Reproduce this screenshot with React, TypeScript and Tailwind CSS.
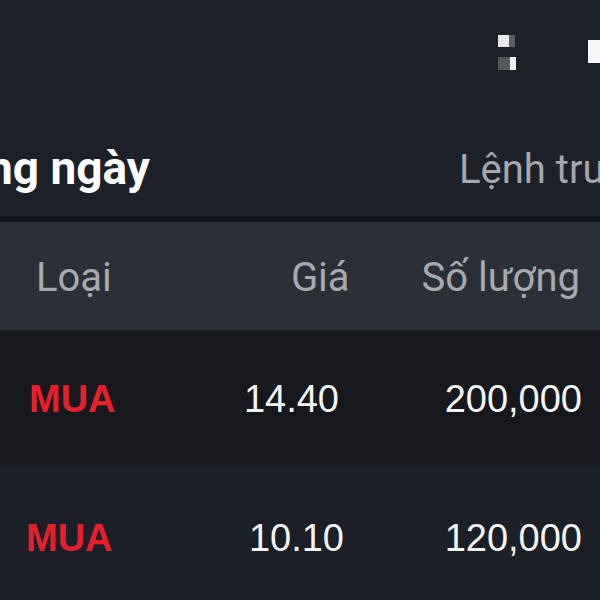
import React from 'react';

const rows = [
  { side: 'MUA', price: '14.40', qty: '200,000', bg: 'bg-[#16181d]', pad: 'pt-[4px]', sideMl: 'ml-[29px]', priceW: 'w-[339px]' },
  { side: 'MUA', price: '10.10', qty: '120,000', bg: 'bg-[#1b2028]', pad: 'pt-[12px]', sideMl: 'ml-[26px]', priceW: 'w-[344px]' },
];

function TopIcons() {
  return (
    <div className="flex h-[130px] items-start justify-end bg-[#1c2028] pt-[35px]">
      {/* blurred fragments of status icons */}
      <div className="mr-[72px] flex flex-col gap-[10px]">
        <div className="flex">
          <span className="h-[12px] w-[11px] bg-[#e8e9eb]" />
          <span className="h-[12px] w-[6px] bg-[#5a5e65]" />
        </div>
        <div className="flex">
          <span className="h-[13px] w-[12px] bg-[#55595f]" />
          <span className="h-[13px] w-[6px] bg-[#f2f2f3]" />
        </div>
      </div>
      <span className="mt-[5px] h-[23px] w-[12px] bg-[#f7f7f8]" />
    </div>
  );
}

function Tabs() {
  return (
    <div className="flex h-[92px] overflow-hidden border-b-[6px] border-[#14171c] bg-[#1c2028] font-['Roboto',sans-serif] leading-none">
      <div className="relative flex w-[290px] shrink-0 items-start justify-end pt-[15px]">
        <span className="whitespace-nowrap pr-[140px] text-[46px] font-bold text-white">Lệnh trong ngày</span>
        <span className="absolute bottom-[-6px] left-0 h-[6px] w-[290px] bg-[#0c56a6]" />
      </div>
      <div className="flex flex-1 items-start pl-[169px] pt-[20px]">
        <span className="whitespace-nowrap text-[40px] text-[#a3a7ae]">Lệnh trước ngày</span>
      </div>
    </div>
  );
}

export default function App() {
  return (
    <div className="h-[600px] w-[600px] overflow-hidden bg-[#1c2028]">
      <TopIcons />
      <Tabs />
      <div className="flex h-[108px] items-center bg-[#2a2f38] pt-[3px] font-['Roboto',sans-serif] text-[40px] text-[#a6aab1]">
        <span className="ml-[36px] flex-1">Loại</span>
        <span className="mr-[72px]">Giá</span>
        <span className="mr-[20px]">Số lượng</span>
      </div>
      {rows.map((r, i) => (
        <div
          key={i}
          className={`flex h-[135px] items-center font-['Liberation_Sans',Arial,sans-serif] text-[38px] ${r.bg} ${r.pad}`}
        >
          <div className={`flex ${r.priceW} shrink-0 items-center`}>
            <span className={`${r.sideMl} flex-1 font-bold text-[#e5202b]`}>{r.side}</span>
            <span className="text-[#f4f4f5]">{r.price}</span>
          </div>
          <span className="flex-1 pr-[18px] text-right text-[#f4f4f5]">{r.qty}</span>
        </div>
      ))}
    </div>
  );
}
